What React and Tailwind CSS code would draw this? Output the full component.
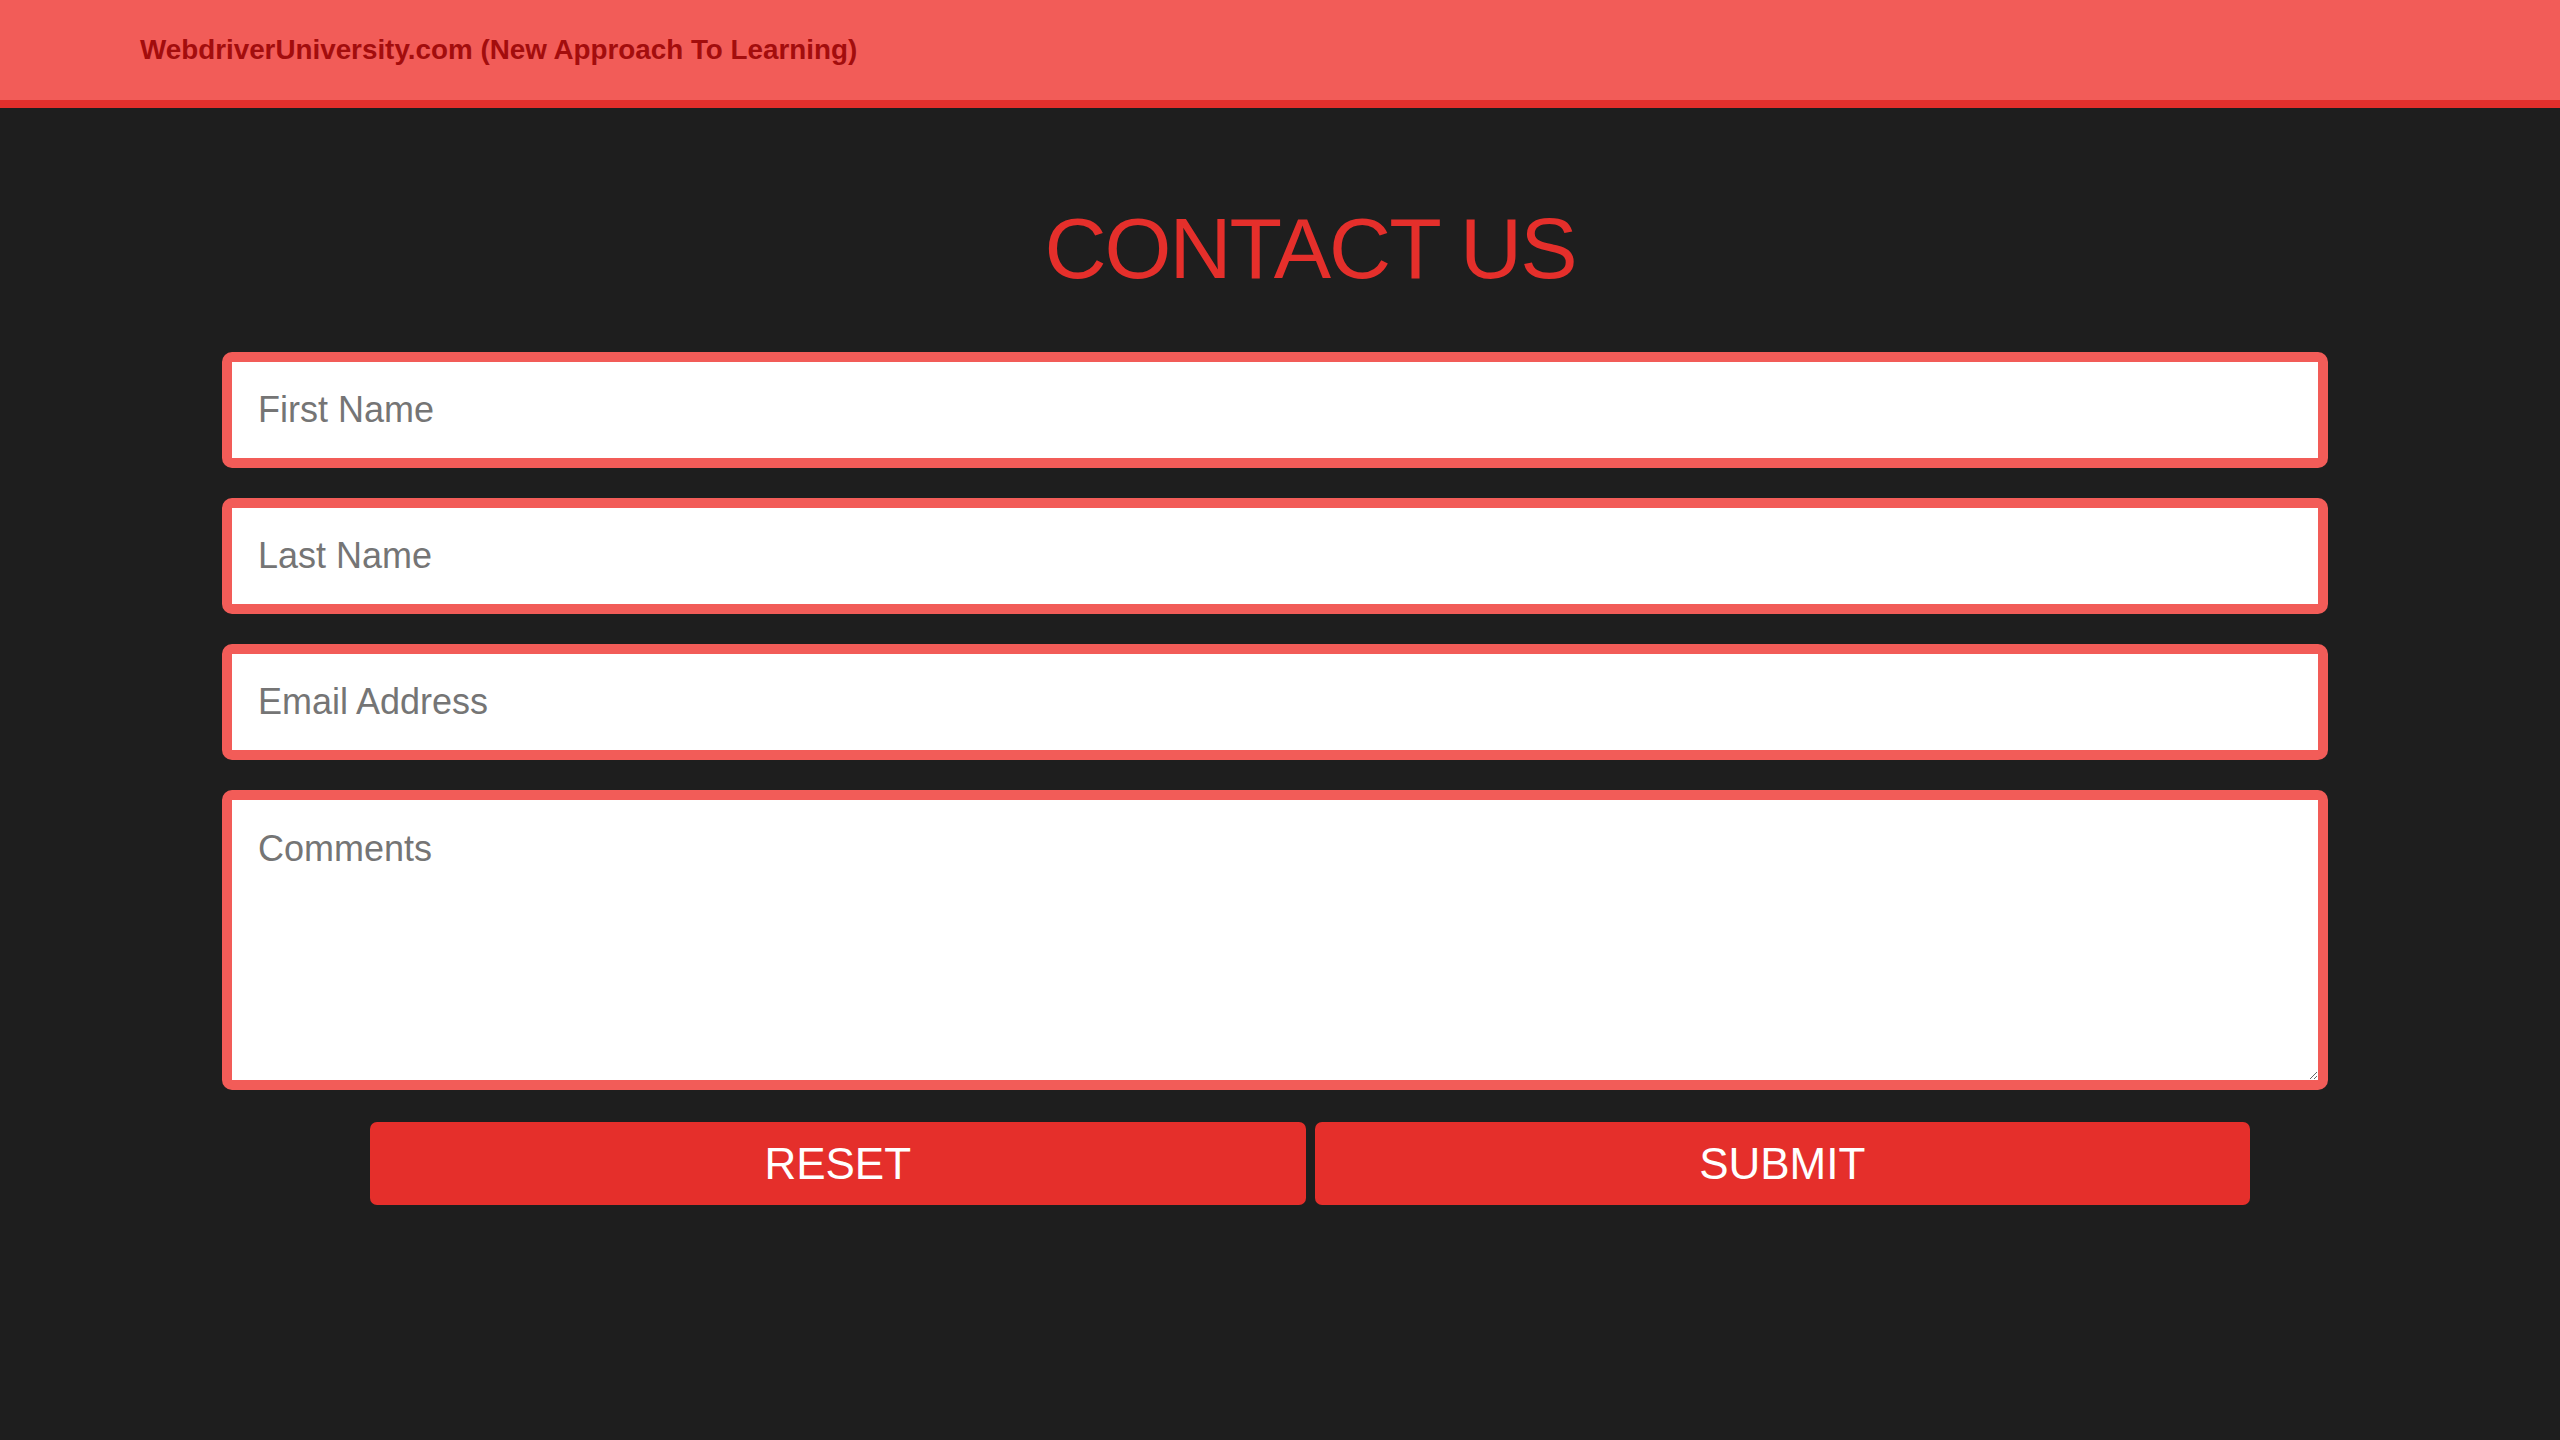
export default function App() {
  return (
    <div
      className="min-h-screen w-full bg-[#1e1e1e]"
      style={{ fontFamily: '"Liberation Sans", Arial, sans-serif' }}
    >
      <header className="h-[108px] bg-[#f25c58] border-b-[8px] border-[#e42f2c] flex items-center pl-[140px]">
        <span className="text-[27.8px] font-bold text-[#a30d0d] leading-[32px]">
          WebdriverUniversity.com (New Approach To Learning)
        </span>
      </header>

      <h1 className="mt-[97px] ml-[370px] w-[1880px] text-center text-[86px] leading-none tracking-[-2px] font-normal text-[#e52f2b]">
        CONTACT US
      </h1>

      <form className="mt-[61px] ml-[222px] w-[2106px] flex flex-col gap-[30px]">
        <input
          type="text"
          placeholder="First Name"
          className="h-[116px] w-full bg-white border-[10px] border-[#f25c58] rounded-[10px] pl-[26px] pr-[24px] text-[36px] text-[#333] placeholder:text-[#757575] outline-none"
        />
        <input
          type="text"
          placeholder="Last Name"
          className="h-[116px] w-full bg-white border-[10px] border-[#f25c58] rounded-[10px] pl-[26px] pr-[24px] text-[36px] text-[#333] placeholder:text-[#757575] outline-none"
        />
        <input
          type="text"
          placeholder="Email Address"
          className="h-[116px] w-full bg-white border-[10px] border-[#f25c58] rounded-[10px] pl-[26px] pr-[24px] text-[36px] text-[#333] placeholder:text-[#757575] outline-none"
        />
        <textarea
          placeholder="Comments"
          className="block h-[300px] w-full bg-white border-[10px] border-[#f25c58] rounded-[10px] pt-[22px] pb-[24px] pl-[26px] pr-[24px] text-[36px] text-[#333] placeholder:text-[#757575] outline-none resize"
        />
      </form>

      <div className="mt-[32px] ml-[370px] w-[1880px] flex gap-[9px]">
        <button
          type="reset"
          className="flex-1 h-[83px] bg-[#e52f2b] rounded-[7px] text-white text-[44px] leading-none"
        >
          RESET
        </button>
        <button
          type="submit"
          className="flex-1 h-[83px] bg-[#e52f2b] rounded-[7px] text-white text-[44px] leading-none"
        >
          SUBMIT
        </button>
      </div>
    </div>
  );
}
